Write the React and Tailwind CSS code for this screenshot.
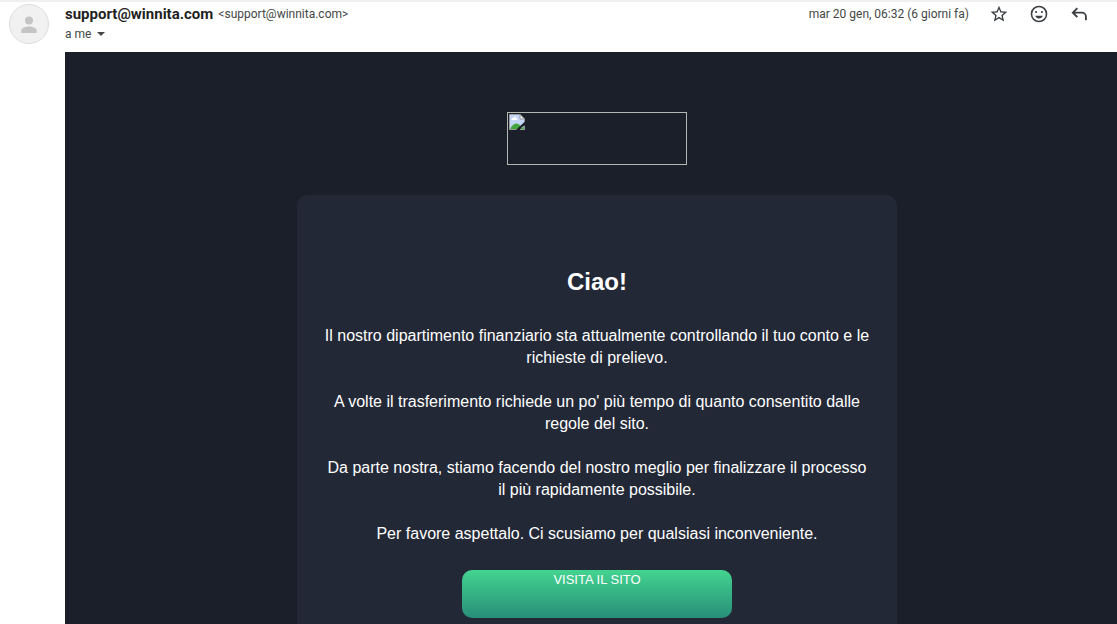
function BrokenImage() {
  return (
    <svg width="16" height="16" viewBox="0 0 16 16" aria-hidden="true">
      <path d="M.5 .5H11L15.5 5V15.5H.5Z" fill="#c3d6f5" />
      <path d="M2.500 5.500C2.500 4.400 3.500 4 4.200 4.100C4.800 2.600 7 2.600 7.300 4.100C8.400 4.200 8.500 5.600 8 6H3Z" fill="#fff" />
      <path d="M1 15C3 11 5.500 9.500 7.500 9.500C9 9.500 10 10.200 11 11.500L11 15Z" fill="#43a53b" />
      <path d="M11 .5V5H15.5Z" fill="#f4f4f4" />
      <path d="M.5 15.5V.5H11L15.5 5V15.5ZM11 .5V5H15.5" fill="none" stroke="#98999b" />
      <path d="M7 16L10 13L16 7.500V11.500L13 13L11 16Z" fill="#1b1f29" />
      <path d="M11.500 15L13 13.500L15 13V15Z" fill="#43a53b" />
      <path d="M11 15.500H15.500V12" fill="none" stroke="#98999b" />
    </svg>
  );
}

function SymbolIcon({ d }) {
  return (
    <svg width="20" height="20" viewBox="0 0 24 24" fill="#3c4043" aria-hidden="true">
      <path d={d} />
    </svg>
  );
}

const actions = [
  {
    label: 'Speciali',
    d: 'M22 9.240l-7.190-.620L12 2 9.190 8.630 2 9.240l5.460 4.730L5.820 21 12 17.270 18.180 21l-1.630-7.030L22 9.240zM12 15.400l-3.760 2.270 1-4.280-3.320-2.880 4.380-.380L12 6.100l1.710 4.040 4.380.380-3.320 2.880 1 4.280L12 15.400z',
  },
  {
    label: 'Aggiungi reazione',
    d: 'M12 2a10 10 0 1 0 0 20a10 10 0 0 0 0-20zM12 20.100a8.100 8.100 0 1 1 0-16.200a8.100 8.100 0 0 1 0 16.200zM7.500 14h9c-.7 2-2.400 3.300-4.500 3.300s-3.800-1.300-4.500-3.300zM8.500 8.300a1.300 1.300 0 1 0 0 2.600a1.300 1.300 0 0 0 0-2.600zM15.500 8.300a1.300 1.300 0 1 0 0 2.600a1.300 1.300 0 0 0 0-2.600z',
  },
  {
    label: 'Rispondi',
    d: 'M9.200 4.200L3 10.400l6.200 6.200l1.600-1.600L7.300 11.500H15.500a3.700 3.700 0 0 1 3.700 3.700V19.500h2.200V15.200a5.900 5.900 0 0 0-5.900-5.900H7.300L10.800 5.800z',
  },
];

const paragraphs = [
  'Il nostro dipartimento finanziario sta attualmente controllando il tuo conto e le richieste di prelievo.',
  "A volte il trasferimento richiede un po' più tempo di quanto consentito dalle regole del sito.",
  'Da parte nostra, stiamo facendo del nostro meglio per finalizzare il processo il più rapidamente possibile.',
  'Per favore aspettalo. Ci scusiamo per qualsiasi inconveniente.',
];

function MessageHeader() {
  return (
    <header className="flex h-[52px] border-t-2 border-[#f0f0f0] pr-7 pl-[9px] font-[Roboto,sans-serif] text-xs text-[#444746]">
      <div className="mt-0.5 flex size-10 shrink-0 items-center justify-center rounded-full border border-[#dddddd] bg-[#f1f1f1]">
        <svg width="24" height="24" viewBox="0 0 24 24" fill="#c4c4c4" aria-hidden="true">
          <circle cx="12" cy="8.500" r="4" />
          <path d="M4.300 21v-2.500C4.300 15.800 9.300 14.500 12 14.500s7.700 1.300 7.700 4V21Z" />
        </svg>
      </div>
      <div className="ml-4 grow">
        <div className="flex h-6 items-center gap-[5px] whitespace-nowrap">
          <h3 className="pt-px text-[15px] font-bold text-[#1f1f1f]">support@winnita.com</h3>
          <span>&lt;support@winnita.com&gt;</span>
        </div>
        <button type="button" className="flex h-4 items-center gap-1.5">
          a me
          <svg width="8" height="4" viewBox="0 0 8 4" fill="#444746" aria-hidden="true">
            <path d="M0 0H8L4 4Z" />
          </svg>
        </button>
      </div>
      <div className="flex h-6 items-center gap-5 whitespace-nowrap">
        <time>mar 20 gen, 06:32 (6 giorni fa)</time>
        {actions.map((a) => (
          <button key={a.label} type="button" aria-label={a.label}>
            <SymbolIcon d={a.d} />
          </button>
        ))}
      </div>
    </header>
  );
}

export default function App() {
  return (
    <div className="flex min-h-screen flex-col bg-white">
      <MessageHeader />
      <main className="ml-[65px] flex grow flex-col items-center bg-[#1b1f29] pt-[60px] pl-3 font-['Liberation_Sans',Arial,sans-serif] text-white">
        <div role="img" aria-label="Logo" className="h-[53px] w-[180px] border border-[#b4b6b3] p-px">
          <BrokenImage />
        </div>
        <section className="mt-[30px] flex w-full max-w-[600px] grow flex-col items-center rounded-t-[10px] bg-[#232837] px-[26px] pt-[71px] pb-1.5 text-center">
          <h1 className="text-2xl font-bold">Ciao!</h1>
          <div className="mt-[27px] flex flex-col gap-[22px] text-base leading-[22px]">
            {paragraphs.map((p) => (
              <p key={p}>{p}</p>
            ))}
          </div>
          <a
            href="#sito"
            className="mt-[25px] h-12 w-[270px] rounded-[10px] bg-linear-to-b from-[#43d490] to-[#298f78] text-[13px] leading-5"
          >
            VISITA IL SITO
          </a>
        </section>
      </main>
    </div>
  );
}
